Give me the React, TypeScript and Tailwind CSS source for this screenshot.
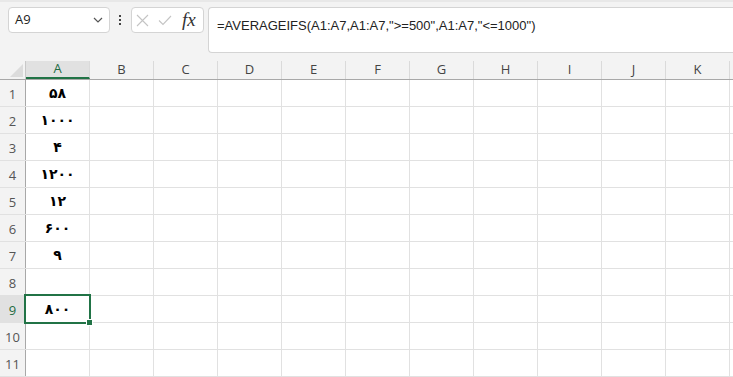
import React from "react";

const cols = ["A", "B", "C", "D", "E", "F", "G", "H", "I", "J", "K", ""];
const vals: Record<number, string> = {
  1: "۵۸",
  2: "۱۰۰۰",
  3: "۴",
  4: "۱۲۰۰",
  5: "۱۲",
  6: "۶۰۰",
  7: "۹",
  9: "۸۰۰",
};

export default function App() {
  const rows = [1, 2, 3, 4, 5, 6, 7, 8, 9, 10, 11];
  return (
    <div
      className="w-[733px] h-[377px] overflow-hidden bg-white relative"
      style={{ fontFamily: "'Open Sans', 'Liberation Sans', sans-serif" }}
    >
      {/* top bar */}
      <div className="h-[61px] bg-[#f3f3f3] border-t-2 border-[#e8e8e8] flex items-start pt-[5px] pl-[8px]">
        <div className="w-[102px] h-[26px] bg-white border border-[#d4d4d4] rounded-[4px] flex items-center pl-[6px] pr-[6px] justify-between">
          <span className="text-[13px] text-[#222]">A9</span>
          <svg width="10" height="6" viewBox="0 0 10 6">
            <path d="M1 1 L5 5 L9 1" fill="none" stroke="#555" strokeWidth="1.2" />
          </svg>
        </div>
        <div className="w-[21px] h-[26px] flex flex-col items-center justify-center gap-[2px] pr-[2px]">
          <div className="w-[2px] h-[2px] bg-[#444]" />
          <div className="w-[2px] h-[2px] bg-[#444]" />
          <div className="w-[2px] h-[2px] bg-[#444]" />
        </div>
        <div className="w-[73px] h-[26px] bg-white border border-[#d4d4d4] rounded-[4px] flex items-center pl-[4px] gap-[9px]">
          <svg width="13" height="13" viewBox="0 0 13 13">
            <path d="M1 1 L12 12 M12 1 L1 12" stroke="#c4c4c4" strokeWidth="1.1" />
          </svg>
          <svg width="14" height="11" viewBox="0 0 14 11">
            <path d="M1 5.5 L5 9.5 L13 1" fill="none" stroke="#c4c4c4" strokeWidth="1.1" />
          </svg>
          <span
            className="text-[19px] italic text-[#333] leading-none ml-[1px] -mt-[2px]"
            style={{ fontFamily: "'Liberation Serif', serif" }}
          >
            fx
          </span>
        </div>
        <div className="ml-[4px] flex-1 h-[46px] bg-white border border-[#d4d4d4] border-r-0 rounded-l-[4px] pl-[8px] pt-[4px]">
          <span className="text-[13px] text-[#222]" style={{ fontFamily: "'Liberation Sans', sans-serif" }}>
            =AVERAGEIFS(A1:A7,A1:A7,"&gt;=500",A1:A7,"&lt;=1000")
          </span>
        </div>
      </div>

      {/* column header row */}
      <div className="h-[19px] flex bg-[#f3f3f3] border-b border-[#a8a8a8]">
        <div className="w-[26px] shrink-0 relative border-r border-[#c8c8c8]">
          <svg className="absolute left-[10px] top-[3px]" width="13" height="13" viewBox="0 0 13 13">
            <path d="M13 0 L13 13 L0 13 Z" fill="#dcdcdc" />
          </svg>
        </div>
        {cols.map((c, i) => (
          <div
            key={i}
            className={
              "w-[64px] shrink-0 border-r border-[#dadada] flex items-center justify-center text-[13px] " +
              (c === "A"
                ? "bg-[#e1e1e1] text-[#1e6b42] border-b-2 border-b-[#217346]"
                : "text-[#444]")
            }
          >
            {c}
          </div>
        ))}
      </div>

      {/* rows */}
      {rows.map((r) => (
        <div key={r} className="h-[27px] flex border-b border-[#e1e1e1]">
          <div
            className={
              "w-[26px] shrink-0 border-r border-[#a8a8a8] flex items-end justify-center pb-[2px] text-[13px] " +
              (r === 9 ? "bg-[#e1e1e1] text-[#1e6b42]" : "bg-[#f3f3f3] text-[#555]")
            }
          >
            {r}
          </div>
          {cols.map((c, i) => (
            <div
              key={i}
              className="w-[64px] shrink-0 border-r border-[#e1e1e1] flex items-start justify-center pt-[3px] text-[14px] font-bold text-black"
              style={{ fontFamily: "'DejaVu Sans', sans-serif" }}
            >
              {c === "A" ? vals[r] ?? "" : ""}
            </div>
          ))}
        </div>
      ))}

      {/* selection */}
      <div className="absolute left-[24px] top-[294px] w-[67px] h-[30px] border-2 border-[#217346] pointer-events-none" />
      <div className="absolute left-[86px] top-[319px] w-[7px] h-[7px] bg-[#217346] border border-white" />
    </div>
  );
}
